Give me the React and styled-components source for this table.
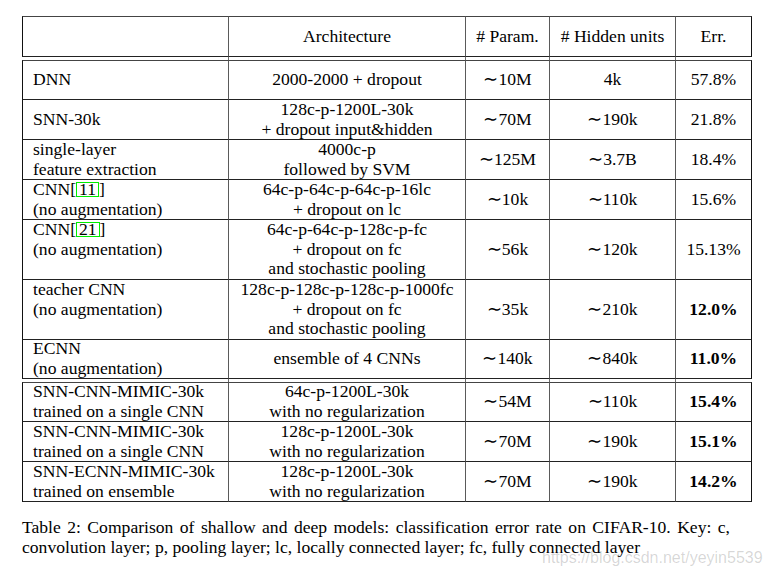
import React from 'react';
import styled, { createGlobalStyle } from 'styled-components';

const GlobalStyle = createGlobalStyle`
  html, body {
    margin: 0;
    padding: 0;
    background: #fff;
  }
  body {
    font-family: 'Liberation Serif', 'Times New Roman', serif;
    color: #000;
  }
`;

const Page = styled.div`
  position: relative;
  width: 770px;
  height: 576px;
  padding: 16px 0 0 22px;
  box-sizing: border-box;
  font-size: 17.6px;
  line-height: 19.6px;
`;

const Grid = styled.div`
  display: grid;
  grid-template-columns: 207px 237px 84px 126px 76px;
  width: 730px;
`;

const Cell = styled.div`
  box-sizing: border-box;
  height: ${p => p.h}px;
  display: flex;
  flex-direction: column;
  justify-content: center;
  align-items: ${p => (p.left ? 'flex-start' : 'center')};
  text-align: ${p => (p.left ? 'left' : 'center')};
  padding-left: ${p => (p.left ? '10px' : '0')};
  white-space: nowrap;
  border-right: ${p => (p.last ? '1px solid #111' : '1px solid #5a5a5a')};
  border-left: ${p => (p.left ? '1px solid #111' : 'none')};
  border-top: ${p => (p.top ? '1px solid #444' : 'none')};
  border-bottom: 1px solid #222;
  font-weight: ${p => (p.bold ? 'bold' : 'normal')};
`;

const GapCell = styled.div`
  height: 3px;
  box-sizing: border-box;
  border-right: ${p => (p.last ? 'none' : '1px solid #6a6a6a')};
`;

const Ref = styled.span`
  display: inline-block;
  border: 1px solid #00ee00;
  line-height: 13px;
  padding: 0 2px;
  margin: 0 0 0 0;
`;

const Caption = styled.div`
  margin-top: 16px;
  width: 708px;
  line-height: 19.5px;
`;

const CaptionLine = styled.div`
  text-align: ${p => (p.justify ? 'justify' : 'left')};
  text-align-last: ${p => (p.justify ? 'justify' : 'left')};
  white-space: nowrap;
`;

const Watermark = styled.div`
  position: absolute;
  left: 542px;
  top: 549px;
  font-family: 'Liberation Sans', Arial, sans-serif;
  font-size: 16px;
  line-height: 18px;
  color: rgba(0, 0, 0, 0.17);
  white-space: nowrap;
`;

const header = ['', 'Architecture', '# Param.', '# Hidden units', 'Err.'];

const rowsA = [
  { h: 40, name: ['DNN'], arch: ['2000-2000 + dropout'], param: '∼10M', hidden: '4k', err: '57.8%' },
  { h: 40, name: ['SNN-30k'], arch: ['128c-p-1200L-30k', '+ dropout input&hidden'], param: '∼70M', hidden: '∼190k', err: '21.8%' },
  { h: 40, name: ['single-layer', 'feature extraction'], arch: ['4000c-p', 'followed by SVM'], param: '∼125M', hidden: '∼3.7B', err: '18.4%' },
  { h: 40, name: [<>CNN[<Ref>11</Ref>]</>, '(no augmentation)'], arch: ['64c-p-64c-p-64c-p-16lc', '+ dropout on lc'], param: '∼10k', hidden: '∼110k', err: '15.6%' },
  { h: 60, name: [<>CNN[<Ref>21</Ref>]</>, '(no augmentation)', ''], arch: ['64c-p-64c-p-128c-p-fc', '+ dropout on fc', 'and stochastic pooling'], param: '∼56k', hidden: '∼120k', err: '15.13%' },
  { h: 60, name: ['teacher CNN', '(no augmentation)', ''], arch: ['128c-p-128c-p-128c-p-1000fc', '+ dropout on fc', 'and stochastic pooling'], param: '∼35k', hidden: '∼210k', err: '12.0%', bold: true },
  { h: 39, name: ['ECNN', '(no augmentation)'], arch: ['ensemble of 4 CNNs'], param: '∼140k', hidden: '∼840k', err: '11.0%', bold: true },
];

const rowsB = [
  { h: 40, name: ['SNN-CNN-MIMIC-30k', 'trained on a single CNN'], arch: ['64c-p-1200L-30k', 'with no regularization'], param: '∼54M', hidden: '∼110k', err: '15.4%', bold: true },
  { h: 40, name: ['SNN-CNN-MIMIC-30k', 'trained on a single CNN'], arch: ['128c-p-1200L-30k', 'with no regularization'], param: '∼70M', hidden: '∼190k', err: '15.1%', bold: true },
  { h: 40, name: ['SNN-ECNN-MIMIC-30k', 'trained on ensemble'], arch: ['128c-p-1200L-30k', 'with no regularization'], param: '∼70M', hidden: '∼190k', err: '14.2%', bold: true },
];

const Lines = ({ items }) => items.map((t, i) => <div key={i}>{t === '' ? '\u00a0' : t}</div>);

const Row = ({ row, top }) => (
  <>
    <Cell h={row.h} left top={top}><Lines items={row.name} /></Cell>
    <Cell h={row.h} top={top}><Lines items={row.arch} /></Cell>
    <Cell h={row.h} top={top}>{row.param}</Cell>
    <Cell h={row.h} top={top}>{row.hidden}</Cell>
    <Cell h={row.h} top={top} last bold={row.bold}>{row.err}</Cell>
  </>
);

const Gap = () => (
  <>
    <GapCell />
    <GapCell />
    <GapCell />
    <GapCell />
    <GapCell last />
  </>
);

const App = () => (
  <>
    <GlobalStyle />
    <Page>
      <Grid>
        {header.map((h, i) => (
          <Cell key={i} h={41} top left={i === 0} last={i === 4}>{h}</Cell>
        ))}
        <Gap />
        {rowsA.map((r, i) => <Row key={i} row={r} top={i === 0} />)}
        <Gap />
        {rowsB.map((r, i) => <Row key={i} row={r} top={i === 0} />)}
      </Grid>
      <Caption>
        <CaptionLine justify>
          Table 2: Comparison of shallow and deep models: classification error rate on CIFAR-10. Key: c,
        </CaptionLine>
        <CaptionLine>
          convolution layer; p, pooling layer; lc, locally connected layer; fc, fully connected layer
        </CaptionLine>
      </Caption>
      <Watermark>https://blog.csdn.net/yeyin5539</Watermark>
    </Page>
  </>
);

export default App;
